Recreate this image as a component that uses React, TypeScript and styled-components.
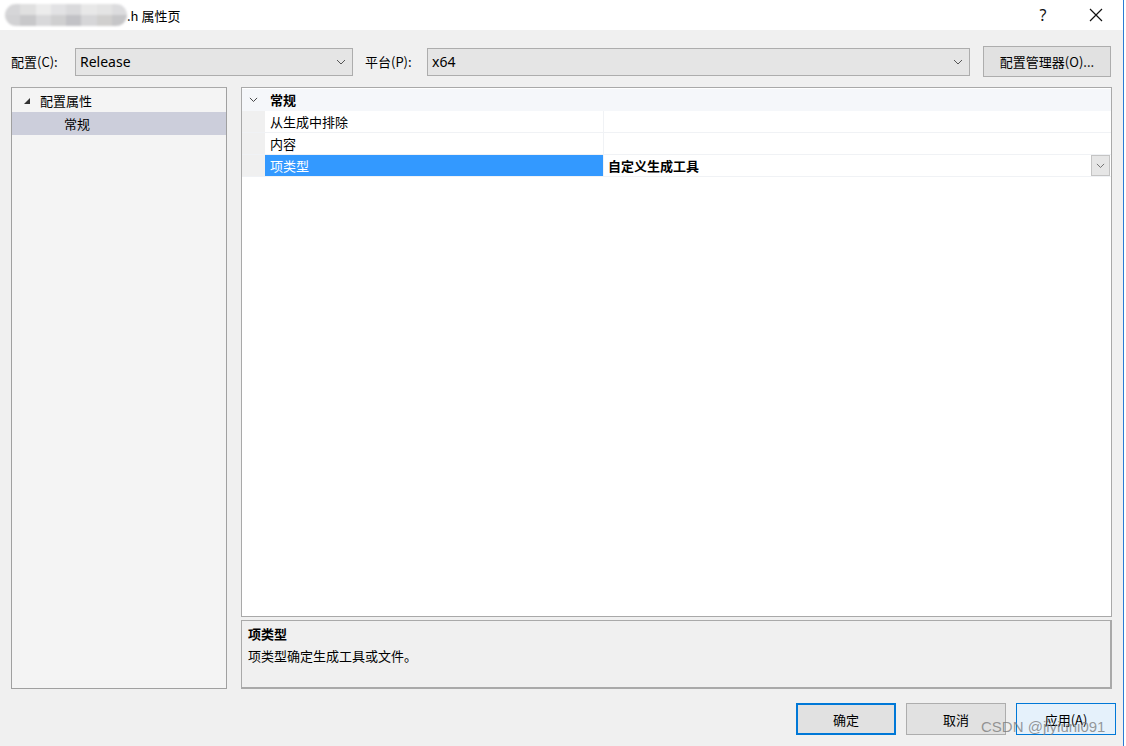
import React from "react";
import styled, { createGlobalStyle } from "styled-components";

const Global = createGlobalStyle`
  html, body { margin: 0; padding: 0; background: #ffffff; }
  body { font-family: "Microsoft YaHei UI", "Noto Sans CJK SC", "Noto Sans", sans-serif; font-size: 13px; color: #000; }
  * { box-sizing: border-box; }
`;

const Window = styled.div`
  position: relative;
  width: 1124px;
  height: 746px;
  background: #f0f0f0;
  border-right: 1px solid #2a7bd4;
  display: flex;
  flex-direction: column;
  overflow: hidden;
`;

const TitleBar = styled.div`
  height: 30px;
  background: #ffffff;
  display: flex;
  align-items: center;
  padding-left: 5px;
`;

const Mosaic = styled.div`
  width: 122px;
  height: 22px;
  display: grid;
  grid-template-columns: repeat(8, 1fr);
  grid-template-rows: 1fr 1fr;
  border-radius: 11px;
  overflow: hidden;
  filter: blur(1.2px);
`;

const Cell = styled.div<{ $c: string }>`
  background: ${(p) => p.$c};
`;

const TitleText = styled.span`
  font-size: 13px;
  color: #000;
  flex: 1;
`;

const TitleBtn = styled.div<{ $w: number }>`
  width: ${(p) => p.$w}px;
  display: flex;
  align-items: center;
  justify-content: center;
  font-family: "Segoe UI", "Noto Sans", sans-serif;
  font-size: 16px;
  color: #111;
`;

const TopRow = styled.div`
  display: flex;
  align-items: center;
  padding: 16px 0 0 11px;
  height: 47px;
`;

const Label = styled.span<{ $w: number; $ml?: number }>`
  width: ${(p) => p.$w}px;
  margin-left: ${(p) => p.$ml ?? 0}px;
  white-space: nowrap;
`;

const Combo = styled.div<{ $w: number }>`
  width: ${(p) => p.$w}px;
  height: 28px;
  background: #e5e5e5;
  border: 1px solid #adadad;
  display: flex;
  align-items: center;
  padding-left: 4px;
  padding-right: 6px;
`;

const ComboText = styled.span`
  flex: 1;
  font-family: "Segoe UI", "Noto Sans", "Noto Sans CJK SC", sans-serif;
  font-size: 14px;
`;

const Button = styled.div<{ $w: number; $h?: number; $ml?: number; $variant?: "default" | "focus" | "hover" }>`
  width: ${(p) => p.$w}px;
  height: ${(p) => p.$h ?? 32}px;
  margin-left: ${(p) => p.$ml ?? 0}px;
  display: flex;
  align-items: center;
  justify-content: center;
  background: ${(p) => (p.$variant === "hover" ? "#e5f1fb" : "#e1e1e1")};
  border: ${(p) =>
    p.$variant === "focus"
      ? "2px solid #0078d7"
      : p.$variant === "hover"
      ? "1px solid #0078d7"
      : "1px solid #adadad"};
  white-space: nowrap;
`;

const Main = styled.div`
  display: flex;
  margin-top: 10px;
  padding-left: 11px;
  gap: 14px;
  height: 602px;
`;

const Tree = styled.div`
  width: 216px;
  height: 602px;
  background: #f4f4f4;
  border: 1px solid #a0a0a0;
  border-top-color: #a9a9a9;
  padding-top: 1px;
`;

const TreeItem = styled.div<{ $indent: number; $selected?: boolean }>`
  height: 23px;
  display: flex;
  align-items: center;
  padding-left: ${(p) => p.$indent}px;
  background: ${(p) => (p.$selected ? "#cccedb" : "transparent")};
`;

const Tri = styled.span`
  width: 0;
  height: 0;
  border-left: 6px solid transparent;
  border-bottom: 6px solid #333;
  margin-right: 10px;
`;

const RightCol = styled.div`
  width: 871px;
  display: flex;
  flex-direction: column;
  gap: 3px;
`;

const Grid = styled.div`
  height: 530px;
  background: #ffffff;
  border: 1px solid #a9a9a9;
  display: flex;
  flex-direction: column;
  padding-top: 1px;
`;

const Row = styled.div<{ $cat?: boolean }>`
  height: 22px;
  display: flex;
  background: ${(p) => (p.$cat ? "#f5f7fa" : "#ffffff")};
  border-bottom: 1px solid ${(p) => (p.$cat ? "#f5f7fa" : "#f0f2f5")};
`;

const Gutter = styled.div<{ $cat?: boolean }>`
  width: 23px;
  background: ${(p) => (p.$cat ? "#f5f7fa" : "#f0f0f0")};
  display: flex;
  align-items: center;
  justify-content: center;
`;

const NameCell = styled.div<{ $selected?: boolean; $bold?: boolean; $span?: boolean }>`
  width: ${(p) => (p.$span ? "auto" : "339px")};
  flex: ${(p) => (p.$span ? 1 : "none")};
  padding-left: 5px;
  display: flex;
  align-items: center;
  background: ${(p) => (p.$selected ? "#3399ff" : "transparent")};
  color: ${(p) => (p.$selected ? "#ffffff" : "#000")};
  font-weight: ${(p) => (p.$bold ? 700 : 400)};
  border-right: ${(p) => (p.$span ? "none" : "1px solid #f0f2f5")};
`;

const ValueCell = styled.div`
  flex: 1;
  display: flex;
  align-items: center;
  padding-left: 4px;
  font-weight: 700;
`;

const ValueText = styled.span`
  flex: 1;
`;

const DropBtn = styled.div`
  width: 19px;
  height: 21px;
  margin-right: 1px;
  background: #e6e6e6;
  border: 1px solid #c4c4c4;
  display: flex;
  align-items: center;
  justify-content: center;
`;

const Desc = styled.div`
  height: 69px;
  background: #f0f0f0;
  border: 1px solid #a9a9a9;
  border-width: 1px 2px 2px 1px;
  padding: 3px 0 0 6px;
  display: flex;
  flex-direction: column;
  gap: 3px;
`;

const DescTitle = styled.div`
  font-weight: 700;
`;

const Footer = styled.div`
  display: flex;
  justify-content: flex-end;
  gap: 10px;
  padding-right: 7px;
  margin-top: 14px;
`;

const Watermark = styled.div`
  position: absolute;
  left: 981px;
  top: 718px;
  font-family: "Liberation Sans", Arial, sans-serif;
  font-size: 15px;
  color: rgba(120, 120, 120, 0.75);
  pointer-events: none;
`;

const Chevron = ({ size = 10, color = "#555" }: { size?: number; color?: string }) => (
  <svg width={size} height={size * 0.6} viewBox="0 0 10 6">
    <path d="M1 1 L5 5 L9 1" fill="none" stroke={color} strokeWidth="1" />
  </svg>
);

const mosaic = [
  "#d6d6d8", "#e0e0e0", "#ececec", "#e2e2e4", "#dadadc", "#e8e8e8", "#e4e4e4", "#dcdcde",
  "#d2d2d4", "#c8c8ca", "#d8d8da", "#cfcfd0", "#c2c2c6", "#d6d6d8", "#d0cfce", "#c6c6c8",
];

export default function App() {
  return (
    <>
      <Global />
      <Window>
        <TitleBar>
          <Mosaic>
            {mosaic.map((c, i) => (
              <Cell key={i} $c={c} />
            ))}
          </Mosaic>
          <TitleText>.h 属性页</TitleText>
          <TitleBtn $w={40}>?</TitleBtn>
          <TitleBtn $w={13} />
          <TitleBtn $w={40}>
            <svg width="14" height="14" viewBox="0 0 14 14">
              <path d="M1 1 L13 13 M13 1 L1 13" stroke="#111" strokeWidth="1.2" />
            </svg>
          </TitleBtn>
          <TitleBtn $w={7} />
        </TitleBar>

        <TopRow>
          <Label $w={64}>配置(C):</Label>
          <Combo $w={278}>
            <ComboText>Release</ComboText>
            <Chevron />
          </Combo>
          <Label $w={62} $ml={12}>
            平台(P):
          </Label>
          <Combo $w={543}>
            <ComboText>x64</ComboText>
            <Chevron />
          </Combo>
          <Button $w={128} $h={31} $ml={13}>
            配置管理器(O)...
          </Button>
        </TopRow>

        <Main>
          <Tree>
            <TreeItem $indent={12}>
              <Tri />
              配置属性
            </TreeItem>
            <TreeItem $indent={52} $selected>
              常规
            </TreeItem>
          </Tree>
          <RightCol>
            <Grid>
              <Row $cat>
                <Gutter $cat>
                  <Chevron size={9} color="#333" />
                </Gutter>
                <NameCell $bold $span>
                  常规
                </NameCell>
              </Row>
              <Row>
                <Gutter />
                <NameCell>从生成中排除</NameCell>
                <ValueCell />
              </Row>
              <Row>
                <Gutter />
                <NameCell>内容</NameCell>
                <ValueCell />
              </Row>
              <Row>
                <Gutter />
                <NameCell $selected>项类型</NameCell>
                <ValueCell>
                  <ValueText>自定义生成工具</ValueText>
                  <DropBtn>
                    <Chevron size={9} color="#666" />
                  </DropBtn>
                </ValueCell>
              </Row>
            </Grid>
            <Desc>
              <DescTitle>项类型</DescTitle>
              <div>项类型确定生成工具或文件。</div>
            </Desc>
          </RightCol>
        </Main>

        <Footer>
          <Button $w={100} $variant="focus">确定</Button>
          <Button $w={100}>取消</Button>
          <Button $w={100} $variant="hover">应用(A)</Button>
        </Footer>
        <Watermark>CSDN @jiyiuni091</Watermark>
      </Window>
    </>
  );
}
